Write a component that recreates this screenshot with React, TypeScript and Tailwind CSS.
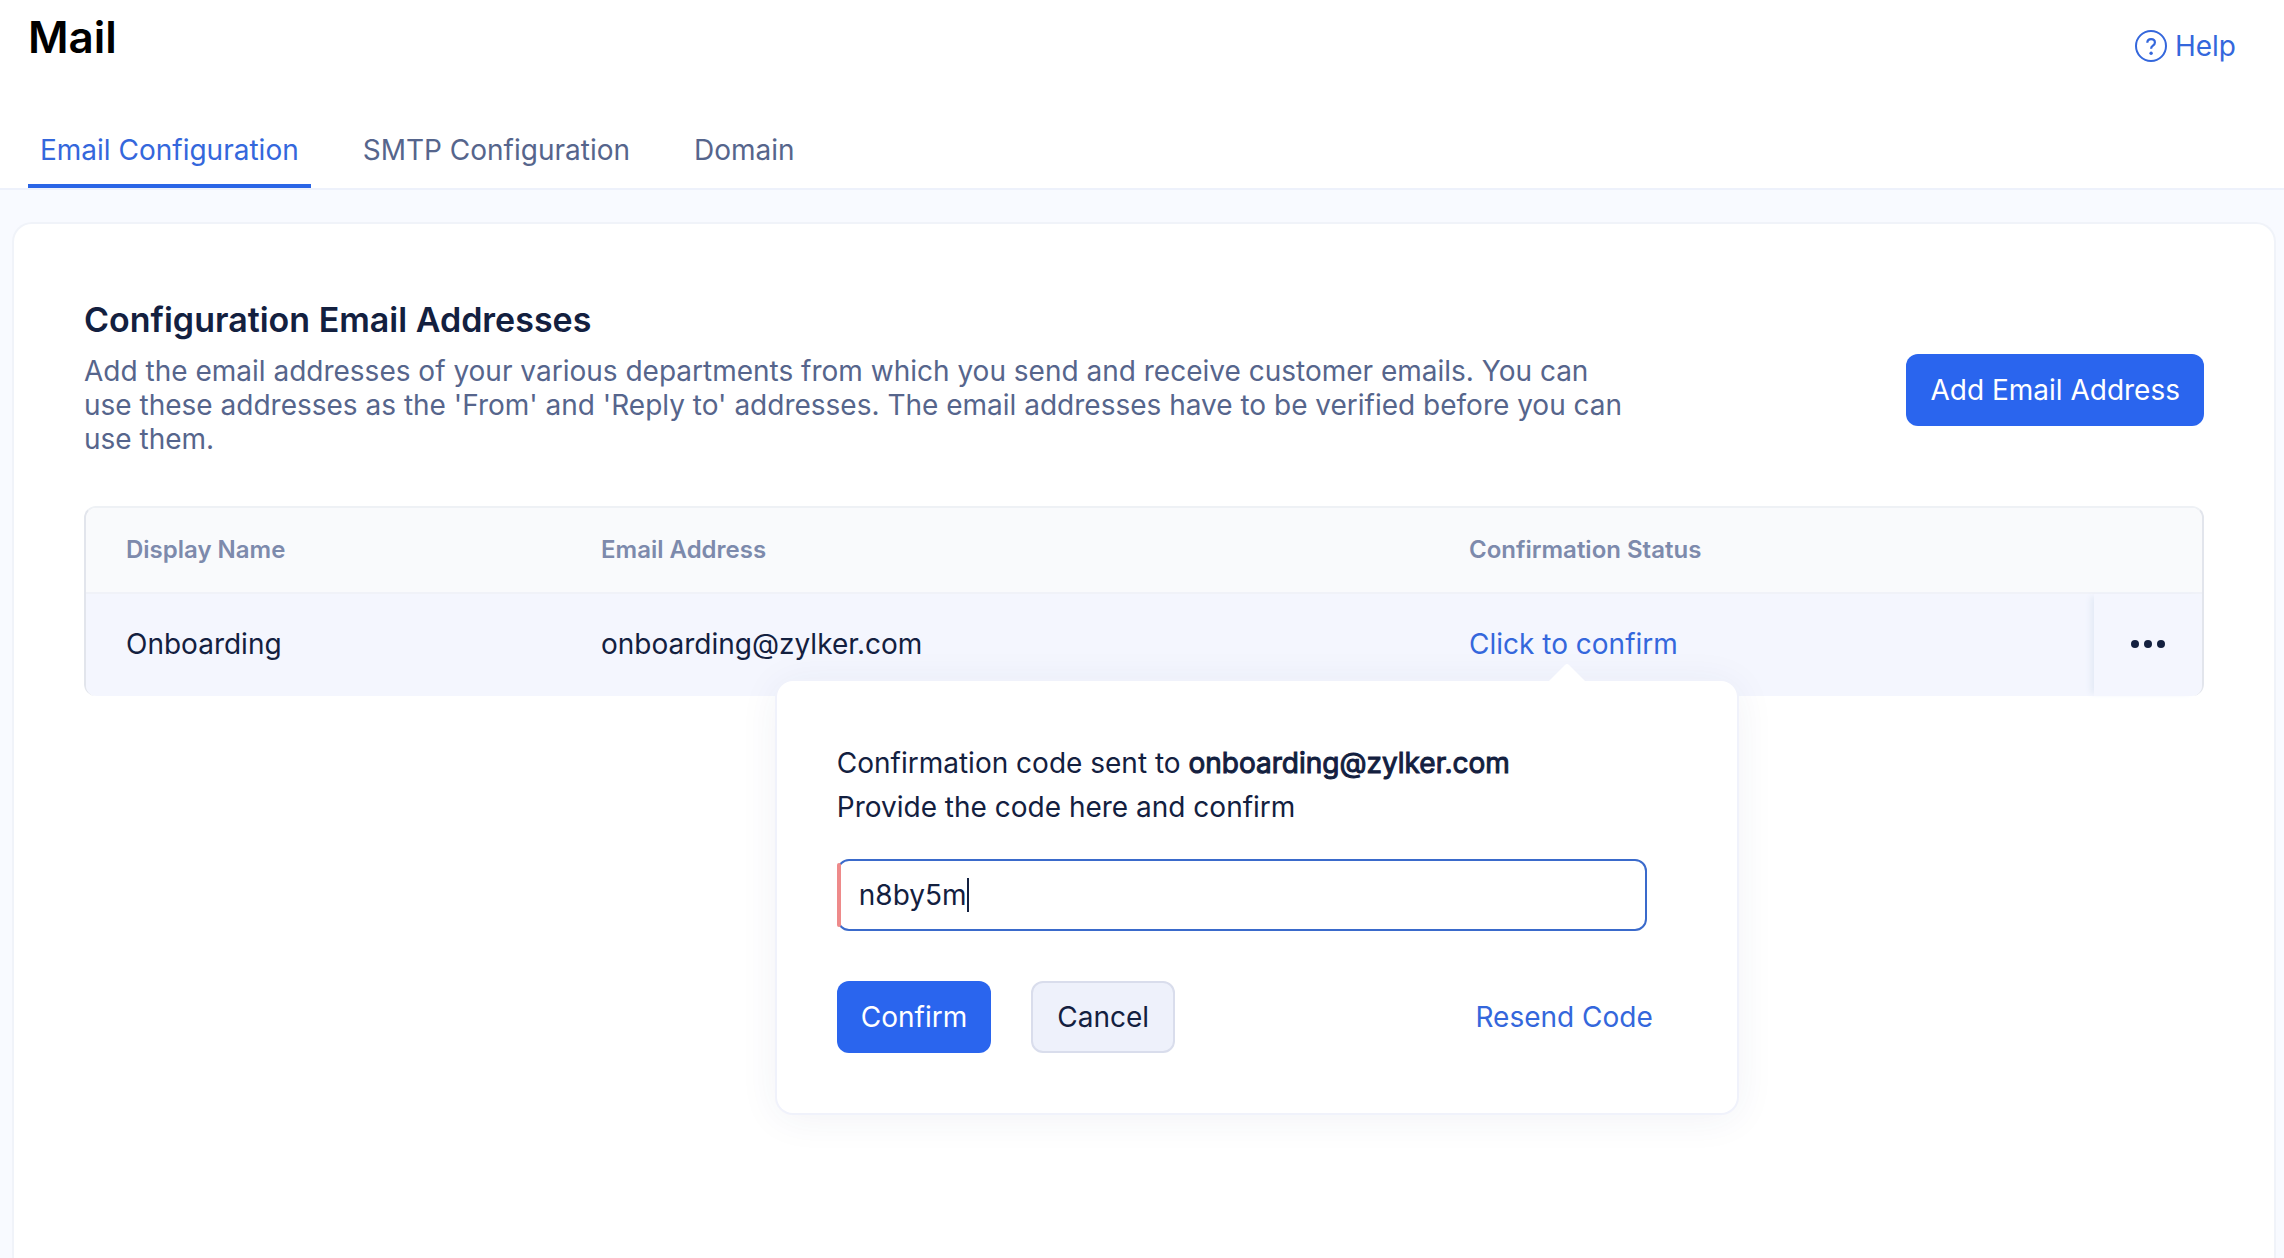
import { useState } from "react";

const tabs = ["Email Configuration", "SMTP Configuration", "Domain"];

const addresses = [{ name: "Onboarding", email: "onboarding@zylker.com" }];

function HelpIcon() {
  return (
    <svg viewBox="0 0 32 32" className="size-8" fill="none" stroke="currentColor" strokeWidth="2" aria-hidden="true">
      <circle cx="16" cy="16" r="15" />
      <path d="M12.3 12.8c0-2.2 1.6-3.7 3.8-3.7s3.8 1.4 3.8 3.4c0 1.6-.9 2.4-2 3.2-1.2.9-1.8 1.5-1.8 3.1" strokeWidth="2.2" />
      <circle cx="16.1" cy="23.3" r="1.7" fill="currentColor" stroke="none" />
    </svg>
  );
}

function MoreIcon() {
  return (
    <svg viewBox="0 0 34 8" className="h-2 w-[34px]" fill="currentColor" aria-hidden="true">
      <circle cx="4" cy="4" r="4" />
      <circle cx="17" cy="4" r="4" />
      <circle cx="30" cy="4" r="4" />
    </svg>
  );
}

function ConfirmPopover({ email }: { email: string }) {
  const [code, setCode] = useState("n8by5m");

  return (
    <div
      role="dialog"
      aria-label="Confirm email address"
      className="absolute top-full -right-[59px] z-10 mt-5 w-[960px] rounded-2xl bg-white py-[60px] pr-[58px] pl-[60px] text-[#13203f] shadow-[0_0_0_2px_#f0f2fb,0_4px_40px_rgba(40,60,120,0.07)]"
    >
      <svg viewBox="0 0 36 18" className="absolute right-[152px] bottom-full h-[18px] w-9" aria-hidden="true">
        <path d="M0 18 16 2q2-2 4 0l16 16z" fill="#fff" />
      </svg>
      <p className="text-[28px] leading-[44px]">
        Confirmation code sent to{" "}
        <strong className="font-normal [-webkit-text-stroke:1px_currentColor]">{email}</strong>
        <br />
        Provide the code here and confirm
      </p>
      <label className="relative mt-[30px] mr-8 flex h-[72px] cursor-text items-center rounded-xl border-2 border-[#3a6acb] pl-5">
        <span className="absolute inset-y-0.5 -left-0.5 w-1 rounded-xs bg-[#ee8a8a]" />
        <input
          aria-label="Confirmation code"
          value={code}
          onChange={(e) => setCode(e.target.value)}
          className="field-sizing-content text-[28px] caret-transparent outline-none"
        />
        <span className="h-[34px] w-0.5 bg-[#13203f]" />
      </label>
      <div className="mt-[50px] mr-[26px] flex items-center">
        <button type="button" className="h-[72px] rounded-xl bg-[#2a65ee] px-6 text-[28px] text-white">
          Confirm
        </button>
        <button
          type="button"
          className="ml-10 h-[72px] rounded-xl border-2 border-[#d9ddec] bg-[#eef1fb] px-6 text-[28px]"
        >
          Cancel
        </button>
        <a href="#resend" className="ml-auto text-[28px] text-[#3467dc]">
          Resend Code
        </a>
      </div>
    </div>
  );
}

export default function App() {
  const [active, setActive] = useState(tabs[0]);

  return (
    <div className="flex h-screen flex-col overflow-hidden bg-[#f8faff] font-[Inter,sans-serif] text-[#13203f]">
      <header className="border-b-2 border-[#edf1fb] bg-white">
        <div className="flex items-start justify-between pr-12 pl-7">
          <h1 className="pt-[7px] text-[44px] leading-[60px] font-semibold text-black">Mail</h1>
          <a href="#help" className="flex items-center gap-2 pt-6 text-[28px] leading-[44px] text-[#3467dc]">
            <HelpIcon />
            Help
          </a>
        </div>
        <nav className="mt-10 flex gap-10 pl-7">
          {tabs.map((tab) => (
            <button
              key={tab}
              type="button"
              onClick={() => setActive(tab)}
              className={
                tab === active
                  ? "h-20 border-b-4 border-[#2a65e6] px-3 pt-2 text-[28px] text-[#3467dc]"
                  : "h-20 border-b-4 border-transparent px-3 pt-2 text-[28px] text-[#56658c]"
              }
            >
              {tab}
            </button>
          ))}
        </nav>
      </header>

      <main className="mt-8 mr-2 ml-3 flex-1 rounded-t-[20px] border-2 border-b-0 border-[#f0f3f9] bg-white px-[70px] pt-[74px]">
        <div className="flex items-start justify-between">
          <div className="max-w-[1540px]">
            <h2 className="text-[34px] leading-[44px] font-semibold">Configuration Email Addresses</h2>
            <p className="mt-3 text-[28px] leading-[34px] text-[#56658c]">
              Add the email addresses of your various departments from which you send and receive customer emails. You
              can use these addresses as the 'From' and 'Reply to' addresses. The email addresses have to be verified
              before you can use them.
            </p>
          </div>
          <button
            type="button"
            className="mt-14 h-[72px] rounded-xl bg-[#2a65ee] px-6 text-[28px] whitespace-nowrap text-white"
          >
            Add Email Address
          </button>
        </div>

        <table className="mt-[50px] w-full table-fixed border-separate border-spacing-0 rounded-xl border-x-2 border-t-2 border-x-[#e2e5ec] border-t-[#eef1f5] text-left">
          <colgroup>
            <col className="w-[475px]" />
            <col className="w-[868px]" />
            <col />
            <col className="w-[108px]" />
          </colgroup>
          <thead className="text-2xl text-[#7d8aac]">
            <tr className="h-[86px]">
              <th className="rounded-tl-[10px] border-b-2 border-[#f0f2f8] bg-[#f9fafc] pl-10 font-semibold">Display Name</th>
              <th className="border-b-2 border-[#f0f2f8] bg-[#f9fafc] pl-10 font-semibold">Email Address</th>
              <th className="border-b-2 border-[#f0f2f8] bg-[#f9fafc] pl-10 font-semibold">Confirmation Status</th>
              <th className="rounded-tr-[10px] border-b-2 border-[#f0f2f8] bg-[#f9fafc]" aria-label="Actions" />
            </tr>
          </thead>
          <tbody className="text-[28px]">
            {addresses.map((row) => (
              <tr key={row.email} className="h-[102px]">
                <td className="rounded-bl-[10px] bg-[#f4f6fe] pb-0.5 pl-10">{row.name}</td>
                <td className="bg-[#f4f6fe] pb-0.5 pl-10">{row.email}</td>
                <td className="bg-[#f4f6fe] pb-0.5 pl-10">
                  <div className="relative inline-block leading-[34px]">
                    <a href="#confirm" className="text-[#3467dc]">
                      Click to confirm
                    </a>
                    <ConfirmPopover email={row.email} />
                  </div>
                </td>
                <td className="rounded-br-[10px] bg-[#f4f6fe] pb-0.5 text-center leading-none shadow-[-6px_0_6px_-3px_#e2e9f5]">
                  <button type="button" aria-label="More actions" className="p-4 align-middle">
                    <MoreIcon />
                  </button>
                </td>
              </tr>
            ))}
          </tbody>
        </table>
      </main>
    </div>
  );
}
